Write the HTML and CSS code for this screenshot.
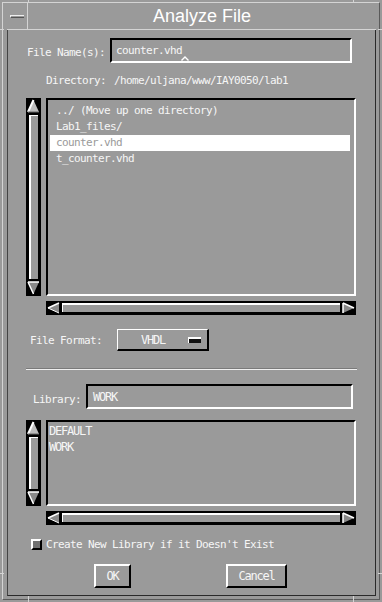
FILE: index.html
```html
<!DOCTYPE html>
<html lang="en">
<head>
    <meta charset="UTF-8">
    <title>Analyze File</title>
    <link rel="stylesheet" href="styles.css">
</head>
<body>
    <div class="window">
        <!-- resize corner marks on the frame -->
        <span class="tick tick-top tick-l"></span>
        <span class="tick tick-top tick-r"></span>
        <span class="tick tick-bot tick-l"></span>
        <span class="tick tick-bot tick-r"></span>
        <span class="tick tick-side tick-lt"></span>
        <span class="tick tick-side tick-rt"></span>
        <span class="tick tick-side tick-lb"></span>
        <span class="tick tick-side tick-rb"></span>

        <div class="frame">
            <div class="titlebar">
                <div class="menu-btn"><span class="dash"></span></div>
                <div class="title">Analyze File</div>
            </div>

            <div class="client">
                <!-- File name -->
                <div class="row row-file">
                    <span class="label">File Name(s):</span>
                    <div class="entry entry-file">
                        <span class="entry-text">counter.vhd</span>
                        <svg class="caret" width="8" height="5" viewBox="0 0 8 5"><path d="M0.5 4.5 L4 1 L7.5 4.5" fill="none" stroke="#fff" stroke-width="1.4"/></svg>
                    </div>
                </div>

                <div class="row row-dir">
                    <span class="label">Directory:</span>
                    <span class="value">/home/uljana/www/IAY0050/lab1</span>
                </div>

                <!-- File list -->
                <div class="listblock list-files">
                    <div class="vscroll">
                        <svg class="arr" width="15" height="16" viewBox="0 0 15 16"><polygon points="7.5,2 2,14 13,14" fill="#bdbdbd"/><path d="M7.5 2 L2 14" stroke="#fff" stroke-width="2"/><path d="M2 14 H13" stroke="#666" stroke-width="1"/></svg>
                        <div class="thumb"></div>
                        <svg class="arr" width="15" height="16" viewBox="0 0 15 16"><polygon points="2,2 13,2 7.5,14" fill="#8a8a8a"/><path d="M2 2 H13 M2 2 L7.5 14" stroke="#fff" stroke-width="1.5"/></svg>
                    </div>
                    <div class="listbox">
                        <div class="item">../ (Move up one directory)</div>
                        <div class="item">Lab1_files/</div>
                        <div class="item selected">counter.vhd</div>
                        <div class="item">t_counter.vhd</div>
                    </div>
                </div>
                <div class="hscroll">
                    <svg class="arr" width="15" height="14" viewBox="0 0 15 14"><polygon points="2,7 13,2 13,12" fill="#8a8a8a"/><path d="M2 7 L13 2" stroke="#fff" stroke-width="1.5"/><path d="M2 7 L13 12" stroke="#fff" stroke-width="1"/></svg>
                    <div class="thumb"></div>
                    <svg class="arr" width="15" height="14" viewBox="0 0 15 14"><polygon points="13,7 2,2 2,12" fill="#8a8a8a"/><path d="M2 2 V12 M2 2 L13 7" stroke="#fff" stroke-width="1.5"/></svg>
                </div>

                <!-- File format -->
                <div class="row row-format">
                    <span class="label">File Format:</span>
                    <div class="optbtn">
                        <span class="opt-text">VHDL</span>
                        <span class="opt-ind"></span>
                    </div>
                </div>

                <div class="separator"></div>

                <!-- Library -->
                <div class="row row-lib">
                    <span class="label">Library:</span>
                    <div class="entry entry-lib">
                        <span class="entry-text narrow">WORK</span>
                    </div>
                </div>

                <div class="listblock list-libs">
                    <div class="vscroll">
                        <svg class="arr" width="15" height="16" viewBox="0 0 15 16"><polygon points="7.5,2 2,14 13,14" fill="#bdbdbd"/><path d="M7.5 2 L2 14" stroke="#fff" stroke-width="2"/><path d="M2 14 H13" stroke="#666" stroke-width="1"/></svg>
                        <div class="thumb"></div>
                        <svg class="arr" width="15" height="16" viewBox="0 0 15 16"><polygon points="2,2 13,2 7.5,14" fill="#8a8a8a"/><path d="M2 2 H13 M2 2 L7.5 14" stroke="#fff" stroke-width="1.5"/></svg>
                    </div>
                    <div class="listbox">
                        <div class="item narrow">DEFAULT</div>
                        <div class="item narrow">WORK</div>
                    </div>
                </div>
                <div class="hscroll">
                    <svg class="arr" width="15" height="14" viewBox="0 0 15 14"><polygon points="2,7 13,2 13,12" fill="#8a8a8a"/><path d="M2 7 L13 2" stroke="#fff" stroke-width="1.5"/><path d="M2 7 L13 12" stroke="#fff" stroke-width="1"/></svg>
                    <div class="thumb"></div>
                    <svg class="arr" width="15" height="14" viewBox="0 0 15 14"><polygon points="13,7 2,2 2,12" fill="#8a8a8a"/><path d="M2 2 V12 M2 2 L13 7" stroke="#fff" stroke-width="1.5"/></svg>
                </div>

                <div class="row row-check">
                    <span class="checkbox"></span>
                    <span class="label">Create New Library if it Doesn't Exist</span>
                </div>

                <div class="row row-buttons">
                    <div class="button btn-ok">OK</div>
                    <div class="button btn-cancel">Cancel</div>
                </div>
            </div>
        </div>
    </div>
</body>
</html>
```

FILE: styles.css
```css
body {
    margin: 0;
    background: #9a9a9a;
    font-family: "DejaVu Sans Mono", monospace;
    font-size: 11px;
    letter-spacing: -0.62px;
    color: #f6f6f6;
}

/* Window frame */
.window {
    position: relative;
    width: 382px; height: 602px;
    box-sizing: border-box;
    padding: 2px;
    background: #9a9a9a;
}
.frame {
    height: 100%;
    box-sizing: border-box;
    border: 1px solid;
    border-color: #d4d4d4 #5a5a5a #5a5a5a #d4d4d4;
    padding: 0 3px 3px 4px;
    display: flex;
    flex-direction: column;
}
.tick { position: absolute; background: #d4d4d4; }
.tick-top { top: 0; width: 1px; height: 3px; }
.tick-bot { bottom: 0; width: 1px; height: 6px; }
.tick-l { left: 28px; }
.tick-r { left: 353px; }
.tick-side { height: 1px; width: 4px; }
.tick-lt { left: 0; top: 29px; }
.tick-rt { right: 0; top: 29px; }
.tick-lb { left: 0; top: 573px; }
.tick-rb { right: 0; top: 573px; }

.titlebar {
    height: 26px;
    display: flex;
    border-bottom: 1px solid #d4d4d4;
}
.menu-btn {
    width: 20px;
    border-right: 1px solid #d4d4d4;
    display: flex;
    align-items: center;
    justify-content: center;
}
.menu-btn .dash {
    width: 13px; height: 1px;
    border-top: 1px solid #eee;
    border-bottom: 1px solid #555;
    border-left: 1px solid #eee;
    background: #9a9a9a;
}
.title {
    flex: 1;
    text-align: center;
    font-family: "Liberation Sans", Arial, sans-serif;
    font-size: 18px;
    letter-spacing: 0;
    line-height: 26px;
    color: #fff;
}

.client {
    flex: 1;
    border: 1px solid;
    border-color: transparent #2a2a2a #2a2a2a #444;
    border-top: none;
    display: flex;
    flex-direction: column;
    align-items: flex-start;
}

.row { display: flex; align-items: center; }
.label { white-space: pre; }
.narrow {
    font-size: 12px;
    letter-spacing: -1.2px;
}

/* Entry fields */
.entry {
    position: relative;
    height: 25px;
    box-sizing: border-box;
    border: 2px solid;
    border-color: #000 #fff #fff #000;
    display: flex;
    align-items: center;
    padding-left: 4px;
}
.caret { position: absolute; left: 69px; top: 16px; }

.row-file { margin: 8px 0 0 19px; gap: 5px; }
.row-file .label { padding-top: 3px; }
.entry-file { width: 242px; }

.row-dir { margin: 10px 0 0 38px; gap: 8px; height: 14px; }

/* Lists and scrollbars */
.listblock { display: flex; gap: 5px; margin: 11px 0 0 18px; }
.list-files { height: 198px; }
.list-libs { height: 86px; }

.vscroll {
    width: 15px;
    background: #000;
    display: flex;
    flex-direction: column;
}
.vscroll .thumb {
    flex: 1;
    margin: 1px 3px 1px 3px;
    border-left: 2px solid #fff;
    border-top: 1px solid #fff;
    background: #9a9a9a;
}
.listbox {
    width: 310px;
    box-sizing: border-box;
    border: 2px solid;
    border-color: #000 #fff #fff #000;
}
.list-files .listbox { padding: 3px 4px 0 2px; }
.list-libs .listbox { padding: 1px 4px 0 1px; }
.item { height: 16px; line-height: 16px; padding-left: 6px; white-space: pre; }
.list-libs .item { padding-left: 0; }
.item.selected { background: #fff; color: #9a9a9a; }

.hscroll {
    width: 310px;
    height: 14px;
    margin: 5px 0 0 38px;
    background: #000;
    display: flex;
}
.hscroll .thumb {
    flex: 1;
    margin: 2px 1px 3px 1px;
    border-top: 2px solid #fff;
    border-left: 1px solid #fff;
    background: #9a9a9a;
}

/* Option menu */
.row-format { margin: 14px 0 0 22px; gap: 15px; }
.row-format .label { padding-top: 1px; }
.optbtn {
    width: 92px; height: 22px;
    box-sizing: border-box;
    border: 2px solid;
    border-color: #fff #000 #000 #fff;
    border-top-width: 1px;
    border-left-width: 1px;
    display: flex;
    align-items: center;
    padding: 0 6px 0 0;
}
.opt-text {
    flex: 1;
    text-align: center;
    font-size: 12px;
    letter-spacing: -1.2px;
}
.opt-ind {
    width: 13px; height: 6px;
    box-sizing: border-box;
    border-top: 2px solid #fff;
    border-left: 1px solid #fff;
    background: #111;
}

.separator {
    width: 331px;
    margin: 17px 0 0 18px;
    border-top: 1px solid #7a7a7a;
    border-bottom: 1px solid #f0f0f0;
}

.row-lib { margin: 14px 0 0 25px; gap: 5px; }
.row-lib .label { padding-top: 5px; }
.entry-lib { width: 267px; padding-left: 5px; }

/* Checkbox and buttons */
.row-check { margin: 12px 0 0 23px; gap: 4px; height: 14px; }
.checkbox {
    width: 11px; height: 11px;
    box-sizing: border-box;
    border: 2px solid;
    border-color: #fff #000 #000 #fff;
    background: #707070;
}

.row-buttons { margin: 13px 0 0 86px; gap: 95px; }
.button {
    height: 24px;
    box-sizing: border-box;
    border: 2px solid;
    border-color: #fff #000 #000 #fff;
    display: flex;
    align-items: center;
    justify-content: center;
    font-size: 12px;
    letter-spacing: -1.2px;
}
.btn-ok { width: 37px; }
.btn-cancel { width: 61px; }
```
